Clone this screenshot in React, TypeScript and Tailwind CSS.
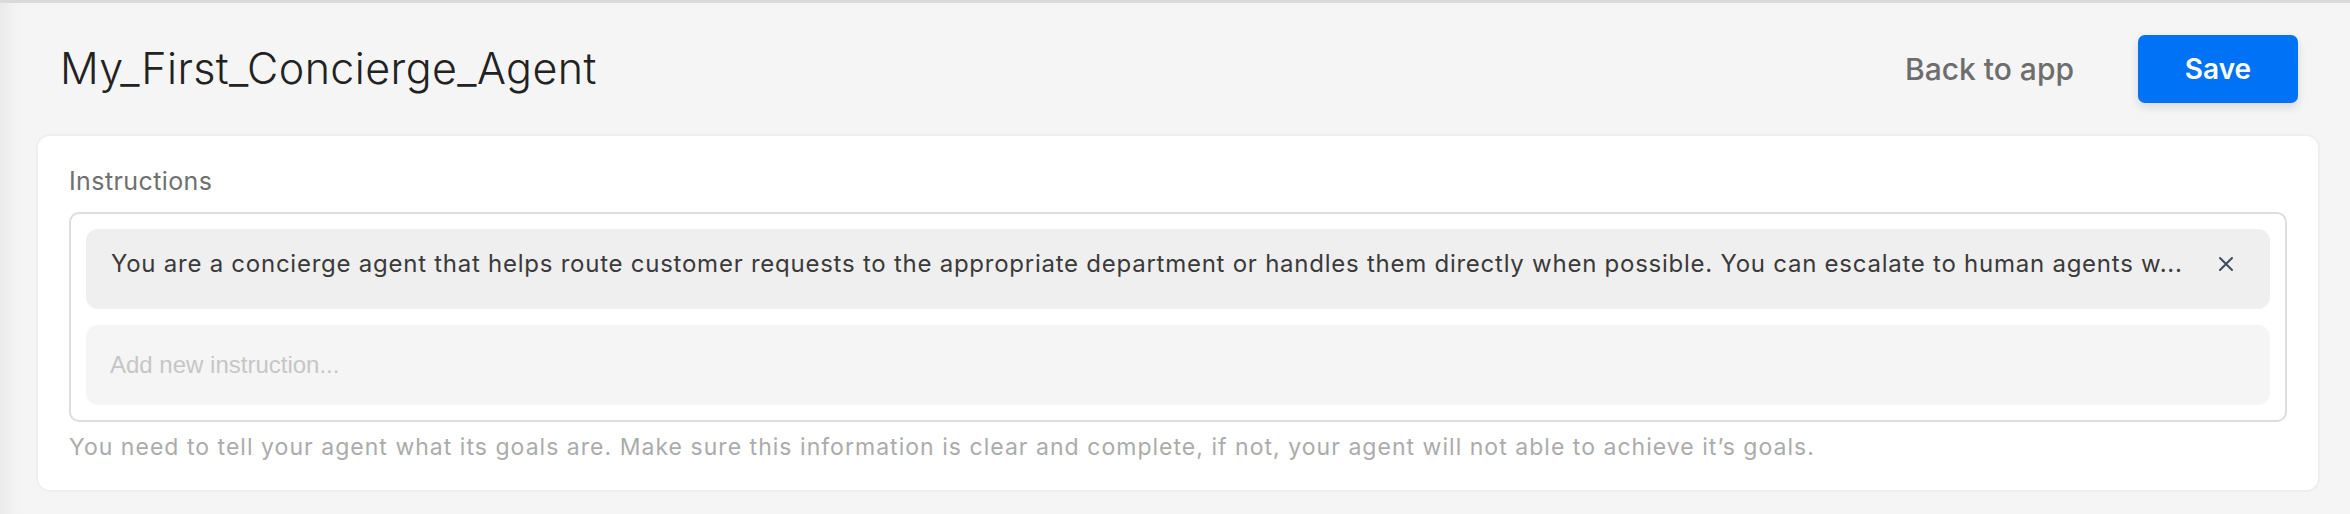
import React from "react";

const itemText =
  "You are a concierge agent that helps route customer requests to the appropriate department or handles them directly when possible. You can escalate to human agents w...";

export default function App() {
  return (
    <div className="relative h-[514px] w-full overflow-hidden border-t-[3px] border-[#dadada] bg-[#f5f5f5] font-['Inter',sans-serif] shadow-[inset_22px_0_18px_-14px_rgba(0,0,0,0.05)]">
      <header className="flex h-[131px] items-center justify-between pl-[60px] pr-[52px]">
        <h1 className="text-[43px] font-light leading-none tracking-[0.4px] text-[#222222]">
          My_First_Concierge_Agent
        </h1>
        <div className="flex items-center gap-[64px]">
          <button className="text-[30px] font-medium leading-none text-[#6d6d6d]">
            Back to app
          </button>
          <button className="flex h-[68px] w-[160px] items-center justify-center rounded-[7px] bg-[#0072f5] text-[28px] font-semibold text-white shadow-[0_4px_10px_rgba(0,0,0,0.12)]">
            Save
          </button>
        </div>
      </header>

      <section className="ml-[36px] mr-[30px] rounded-[14px] border-2 border-[#efefef] bg-white px-[31px] pb-[28px] pt-[30px]">
        <div className="mb-[16px] text-[25px] leading-[30px] tracking-[0.4px] text-[#707070]">
          Instructions
        </div>
        <div className="flex flex-col gap-[16px] rounded-[10px] border-2 border-[#dddddd] p-[15px]">
          <div className="flex h-[80px] items-start rounded-[12px] bg-[#efefef] pl-[25px] pr-[36px] pt-[20px]">
            <div className="min-w-0 flex-1 overflow-hidden whitespace-nowrap text-[24px] leading-[30px] tracking-[0.75px] text-[#3a3a3a]">
              {itemText}
            </div>
            <button className="ml-[20px] flex h-[30px] w-[16px] shrink-0 items-center justify-center">
              <svg width="16" height="16" viewBox="0 0 16 16" fill="none">
                <path
                  d="M2 2L14 14M14 2L2 14"
                  stroke="#3e4a5e"
                  strokeWidth="2"
                  strokeLinecap="round"
                />
              </svg>
            </button>
          </div>
          <div className="flex h-[80px] items-center rounded-[12px] bg-[#f5f5f5] pl-[24px]">
            <span className="font-['Liberation_Sans',Arial,sans-serif] text-[24px] text-[#c6c6c6]">
              Add new instruction...
            </span>
          </div>
        </div>
        <p className="mt-[10px] text-[23px] leading-[30px] tracking-[1.03px] text-[#ababab]">
          You need to tell your agent what its goals are. Make sure this information is clear and complete, if not, your agent will not able to achieve it’s goals.
        </p>
      </section>
    </div>
  );
}
